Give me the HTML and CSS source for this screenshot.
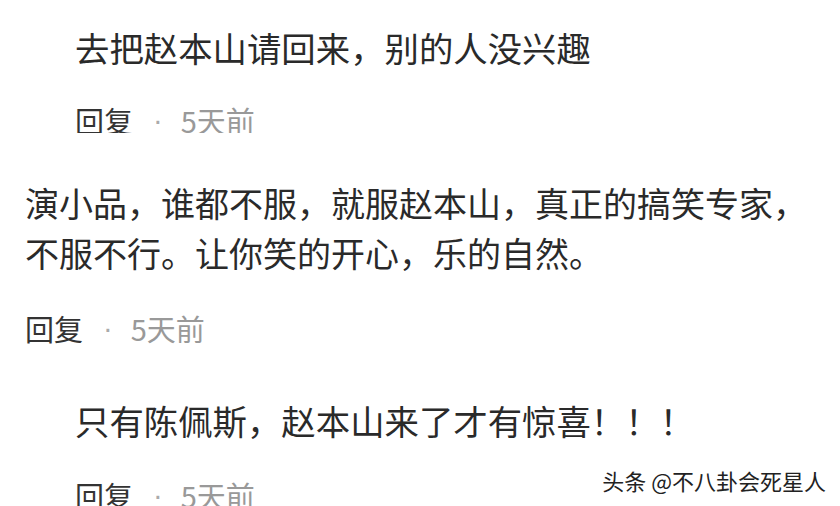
FILE: index.html
```html
<!DOCTYPE html>
<html lang="zh-CN">
<head>
  <meta charset="UTF-8" />
  <meta name="viewport" content="width=device-width, initial-scale=1.0"/>
  <title>评论</title>
  <link rel="stylesheet" href="styles.css">
</head>
<body>

  <div class="comentarios">
    <div class="comentario respuesta primero">
      <p class="texto">去把赵本山请回来，别的人没兴趣</p>
      <div class="meta cortada">
        <span class="responder">回复</span><span class="punto">·</span><span class="tiempo">5天前</span>
      </div>
    </div>

    <div class="comentario">
      <p class="texto">演小品，谁都不服，就服赵本山，真正的搞笑专家，<br>不服不行。让你笑的开心，乐的自然。</p>
      <div class="meta">
        <span class="responder">回复</span><span class="punto">·</span><span class="tiempo">5天前</span>
      </div>
    </div>

    <div class="comentario respuesta">
      <p class="texto">只有陈佩斯，赵本山来了才有惊喜！！！</p>
      <div class="meta">
        <span class="responder">回复</span><span class="punto">·</span><span class="tiempo">5天前</span>
      </div>
    </div>
  </div>

  <div class="marca">头条 @不八卦会死星人</div>

</body>
</html>
```

FILE: styles.css
```css
    body {
      font-family: "Noto Sans CJK SC", "Noto Sans", sans-serif;
      margin: 0;
      background-color: #ffffff;
      color: #2a2a2a;
      height: 506px;
      overflow: hidden;
      position: relative;
    }
    .comentarios {
      padding-top: 22px;
    }
    .comentario {
      padding-left: 25px;
      margin-bottom: 47px;
    }
    .comentario.respuesta {
      padding-left: 75px;
    }
    .respuesta .texto {
      font-size: 34.4px;
    }
    .primero {
      margin-bottom: 45px;
    }
    .texto {
      margin: 0;
      font-size: 34px;
      line-height: 50px;
      white-space: nowrap;
    }
    .meta {
      margin-top: 30px;
      font-size: 29px;
      line-height: 40px;
      height: 40px;
      white-space: nowrap;
    }
    .meta.cortada {
      margin-top: 28px;
      height: 33px;
      overflow: hidden;
    }
    .responder {
      color: #333;
    }
    .punto {
      font-family: "Liberation Sans", sans-serif;
      color: #aaa;
      margin: 0 18px 0 20px;
      vertical-align: 3px;
    }
    .tiempo {
      color: #999;
    }
    .marca {
      position: absolute;
      right: 14px;
      bottom: 12px;
      font-size: 22px;
      line-height: 28px;
      color: #222;
      text-shadow: 0 0 2px #fff, 0 0 2px #fff;
    }
```
